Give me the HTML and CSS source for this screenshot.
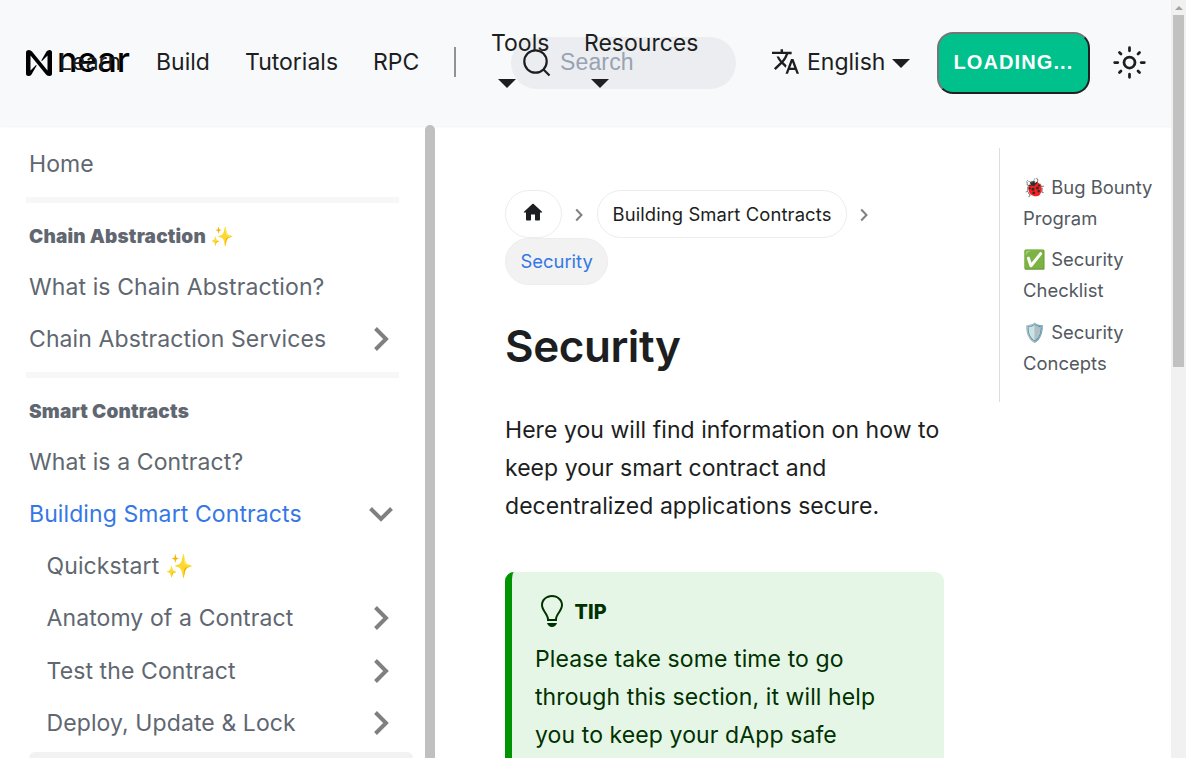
FILE: index.html
```html
<!DOCTYPE html>
<html lang="en">
<head>
<meta charset="utf-8">
<title>Security | NEAR Documentation</title>
<link rel="stylesheet" href="styles.css">
</head>
<body>
<div class="window">
  <div class="page">
    <header class="navbar">
      <a class="brand">
        <svg class="brand-mark" viewBox="0 0 26 26"><path fill-rule="evenodd" d="M3 0Q4.500 0 6 1.500L21.500 20.500V5.500L16 11L15.300 10.500L20.500 1.500Q21.500 0 23.500 0Q26 0 26 2.500V23.500Q26 26 23.500 26Q21.500 26 20 24.500L4.500 5.500V20.500L10 15L10.700 15.500L5.500 24.500Q4.500 26 2.500 26Q0 26 0 23.500V2.500Q0 0 3 0Z"/></svg>
        <span class="brand-name">near</span>
      </a>
      <nav class="links">
        <a class="link learn">Learn</a>
        <a class="link build">Build</a>
        <a class="link tutorials">Tutorials</a>
        <a class="link rpc">RPC</a>
        <span class="divider"></span>
        <a class="link drop tools">Tools<i class="caret"></i></a>
        <a class="link drop resources">Resources<i class="caret"></i></a>
      </nav>
      <div class="search">
        <svg class="search-icon" viewBox="0 0 28 28" fill="none" stroke="#1c1e21" stroke-width="2.200"><circle cx="12.500" cy="12.500" r="11.200"/><path d="M20.500 20.500L26.500 26.500"/></svg>
        <span>Search</span>
      </div>
      <div class="language">
        <svg class="lang-icon" viewBox="1 2 22 20"><path fill="#1c1e21" d="M12.870 15.070l-2.540-2.510.030-.030c1.740-1.940 2.980-4.170 3.710-6.530H17V4h-7V2H8v2H1v1.990h11.170C11.500 7.920 10.440 9.750 9 11.350 8.070 10.320 7.300 9.190 6.690 8h-2c.730 1.630 1.730 3.170 2.980 4.560l-5.090 5.020L4 19l5-5 3.110 3.110.760-2.040zM18.500 10h-2L12 22h2l1.120-3h4.750L21 22h2l-4.500-12zm-2.620 7l1.620-4.330L19.120 17h-3.240z"/></svg>
        <span class="link">English</span><i class="caret"></i>
      </div>
      <button class="login">LOADING...</button>
      <svg class="sun" viewBox="0 0 24 24"><g fill="none" stroke="#1c1e21" stroke-width="2" stroke-linecap="round"><circle cx="12" cy="12" r="4"/><path d="M12 1.200v2.300M12 20.500v2.300M1.200 12h2.300M20.500 12h2.300M4.700 4.700l1.100 1.100M18.200 18.200l1.100 1.100M4.700 19.300l1.100-1.100M18.200 5.800l1.100-1.100"/></g></svg>
    </header>
    <div class="body">
      <aside class="sidebar">
        <a class="item">Home</a>
        <hr>
        <h2 class="group">Chain Abstraction ✨</h2>
        <a class="item">What is Chain Abstraction?</a>
        <a class="item">Chain Abstraction Services<svg class="chev" viewBox="0 0 16 26"><path d="M2.500 2.500L13 13L2.500 23.500"/></svg></a>
        <hr>
        <h2 class="group">Smart Contracts</h2>
        <a class="item">What is a Contract?</a>
        <a class="item active">Building Smart Contracts<svg class="chev open" viewBox="0 0 16 26"><path d="M2.500 2.500L13 13L2.500 23.500"/></svg></a>
        <a class="item sub">Quickstart ✨</a>
        <a class="item sub">Anatomy of a Contract<svg class="chev" viewBox="0 0 16 26"><path d="M2.500 2.500L13 13L2.500 23.500"/></svg></a>
        <a class="item sub">Test the Contract<svg class="chev" viewBox="0 0 16 26"><path d="M2.500 2.500L13 13L2.500 23.500"/></svg></a>
        <a class="item sub">Deploy, Update &amp; Lock<svg class="chev" viewBox="0 0 16 26"><path d="M2.500 2.500L13 13L2.500 23.500"/></svg></a>
        <div class="hovered"></div>
      </aside>
      <div class="side-thumb"></div>
      <main class="content">
        <nav class="crumbs">
          <a class="crumb home"><svg viewBox="2 3 20 17"><path fill="#1c1e21" d="M10 19v-5h4v5c0 .550.450 1 1 1h3c.550 0 1-.450 1-1v-7h1.700c.460 0 .680-.570.330-.870L12.670 3.600c-.380-.340-.960-.340-1.340 0l-8.360 7.530c-.340.300-.130.870.330.870H5v7c0 .550.450 1 1 1h3c.550 0 1-.450 1-1z"/></svg></a>
          <svg class="sep" viewBox="0 0 8 14"><path d="M1.200 1.500L6.500 7L1.200 12.500"/></svg>
          <a class="crumb">Building Smart Contracts</a>
          <svg class="sep" viewBox="0 0 8 14"><path d="M1.200 1.500L6.500 7L1.200 12.500"/></svg>
          <a class="crumb current">Security</a>
        </nav>
        <h1>Security</h1>
        <p class="intro">Here you will find information on how to<br>keep your smart contract and<br>decentralized applications secure.</p>
        <section class="tip">
          <div class="tip-title"><svg viewBox="0 0 12 16"><path fill="#003100" fill-rule="evenodd" d="M6.500 0C3.480 0 1 2.190 1 5c0 .920.550 2.250 1 3 1.340 2.250 1.780 2.780 2 4v1h5v-1c.220-1.220.660-1.750 2-4 .450-.750 1-2.080 1-3 0-2.810-2.480-5-5.500-5zm3.640 7.480c-.250.440-.470.800-.670 1.110-.860 1.410-1.250 2.060-1.450 3.230-.020.050-.020.110-.020.170H5c0-.060 0-.130-.020-.170-.200-1.170-.590-1.830-1.450-3.230-.200-.310-.420-.670-.670-1.110C2.440 6.780 2 5.650 2 5c0-2.200 2.020-4 4.500-4 1.220 0 2.360.420 3.220 1.190C10.550 2.940 11 3.940 11 5c0 .660-.440 1.780-.860 2.480zM4 14h5c-.230 1.140-1.300 2-2.500 2s-2.270-.860-2.500-2z"/></svg><span>TIP</span></div>
          <p>Please take some time to go<br>through this section, it will help<br>you to keep your dApp safe</p>
        </section>
      </main>
      <aside class="toc">
        <a>🐞 Bug Bounty<br>Program</a>
        <a>✅ Security<br>Checklist</a>
        <a>🛡️ Security<br>Concepts</a>
      </aside>
    </div>
  </div>
  <div class="scroll"><i class="scroll-up"></i><div class="scroll-thumb"></div></div>
</div>
</body>
</html>
```
FILE: styles.css
```css
* { box-sizing: border-box; }
body { margin: 0; background: #fff; color: #1c1e21; font: 23px/38px Inter, "Noto Color Emoji", sans-serif; }
h1, h2, p { margin: 0; }
.window { display: flex; width: 1186px; height: 758px; overflow: hidden; }
.page { flex: 1; min-width: 0; display: flex; flex-direction: column; position: relative; }

.navbar { position: relative; z-index: 1; flex: none; display: flex; align-items: center; height: 126px; background: #f8f9fb; box-shadow: 0 1px 2px rgba(0, 0, 0, .05); }
.brand { display: flex; align-items: center; flex: none; width: 105px; margin: -3px 0 0 26px; color: #000; }
.brand-mark { width: 26px; height: 26px; margin-top: 2px; flex: none; }
.brand-name { margin: -3px 0 0 5px; font-size: 34px; font-weight: 500; letter-spacing: -.1px; }
.links { display: flex; align-items: center; flex: none; margin: -2px 0 0 -72px; width: 640px; }
.link { font-size: 23px; white-space: nowrap; }
.learn { width: 97px; }
.build { width: 89px; }
.tutorials { width: 128px; }
.rpc { width: 81px; }
.divider { width: 2px; height: 30px; background: #909295; margin-right: 35px; }
.drop { position: relative; z-index: 2; display: flex; flex-direction: column; height: 76px; }
.drop .caret { margin: 17px 0 0 7px; }
.tools { width: 93px; }
.caret { display: block; width: 0; height: 0; border: 9px solid transparent; border-top-color: #1c1e21; border-bottom: 0; }
.search { position: absolute; left: 511px; top: 37px; width: 225px; height: 52px; border-radius: 26px; background: #ebedf0; display: flex; align-items: center; padding-left: 12px; color: #98a3b4; font: 23px "Liberation Sans", sans-serif; letter-spacing: .15px; }
.search-icon { width: 28px; height: 28px; margin-right: 9px; }
.search span { margin-top: -2px; }
.language { display: flex; align-items: center; margin: -2px 0 0 73px; flex: none; width: 165px; }
.lang-icon { width: 27px; height: 25px; margin: -1px 8px 0 0; }
.language .caret { margin-left: 7px; margin-top: 3px; }
.login { flex: none; width: 153px; height: 62px; border: 2px solid; border-color: #767676 #212121 #212121 #767676; border-radius: 16px; background: #00c08b; color: #fff; padding: 0 0 2px; font: 600 20px "Liberation Sans", sans-serif; letter-spacing: 1.100px; }
.sun { flex: none; width: 33px; height: 33px; margin: -2px 0 0 23px; }

.body { display: flex; flex: 1; min-height: 0; }
.sidebar { flex: none; width: 425px; padding: 12px 26px 0; color: #606770; overflow: hidden; letter-spacing: .1px; }
.item { display: flex; align-items: center; justify-content: space-between; height: 52.200px; padding: 0 10px 0 3px; white-space: nowrap; }
.sub { padding-left: 20.500px; }
.active { color: #3578e5; }
.sidebar hr { height: 6px; margin: 7px 0 6.600px; border: 0; background: #f7f7f8; }
.group { height: 51px; padding-left: 3px; font-size: 19px; line-height: 53px; font-weight: 900; letter-spacing: .19px; }
.chev { width: 16px; height: 26px; fill: none; stroke: #808080; stroke-width: 4; }
.open { transform: rotate(90deg); }
.hovered { height: 40px; margin: 3px -14px 0 3px; border-radius: 6px; background: #f2f2f2; }
.side-thumb { flex: none; width: 10px; margin-top: -1px; border-radius: 5px 5px 0 0; background: #c0c0c0; position: relative; z-index: 2; }

.content { flex: none; width: 509px; padding: 64px 0 0 70px; }
.crumbs { display: flex; flex-wrap: wrap; align-items: center; height: 95px; font-size: 18.400px; }
.crumb { height: 47.500px; padding: 0 14.500px; border: 1px solid #ededed; border-radius: 24px; line-height: 47px; white-space: nowrap; letter-spacing: .12px; }
.home { width: 57px; padding: 0 2px 0 0; display: flex; justify-content: center; align-items: center; }
.home svg { width: 20px; height: 18px; margin-bottom: 3px; }
.sep { width: 8px; height: 14px; margin: 2px 14px 0 13px; fill: none; stroke: #808080; stroke-width: 2; }
.current { background: #f2f2f2; color: #3578e5; line-height: 45px; letter-spacing: 0; }
h1 { margin-top: 33px; font-size: 44px; line-height: 57px; font-weight: 600; letter-spacing: -.45px; }
.intro { margin-top: 36px; white-space: nowrap; letter-spacing: .05px; }
.tip { height: 260px; margin-top: 47px; padding: 20px 0 0 23px; border-left: 7px solid #009400; border-radius: 9px; background: #e6f6e6; color: #003100; white-space: nowrap; letter-spacing: .1px; }
.tip-title { display: flex; align-items: center; height: 38px; margin-bottom: 10px; font-size: 19.800px; font-weight: 800; }
.tip-title svg { width: 26px; height: 32px; margin: 0 10.500px 0 3px; }
.tip-title span { margin-top: 2px; }

.toc { margin: 22px 0 0 55px; width: 172px; height: 254px; padding: 24px 0 0 23px; border-left: 1px solid #dadde1; color: #525860; font-size: 18.400px; line-height: 30.600px; white-space: nowrap; letter-spacing: .04px; }
.toc a { display: block; margin-bottom: 11.300px; }

.scroll { flex: none; width: 15px; background: #f1f1f1; }
.scroll-up { display: block; margin: 6px 0 5px 4px; width: 0; height: 0; border: 4px solid transparent; border-top: 0; border-bottom-color: #a3a3a3; }
.scroll-thumb { width: 11px; height: 352px; margin-left: 2px; background: #c1c1c1; }
```
